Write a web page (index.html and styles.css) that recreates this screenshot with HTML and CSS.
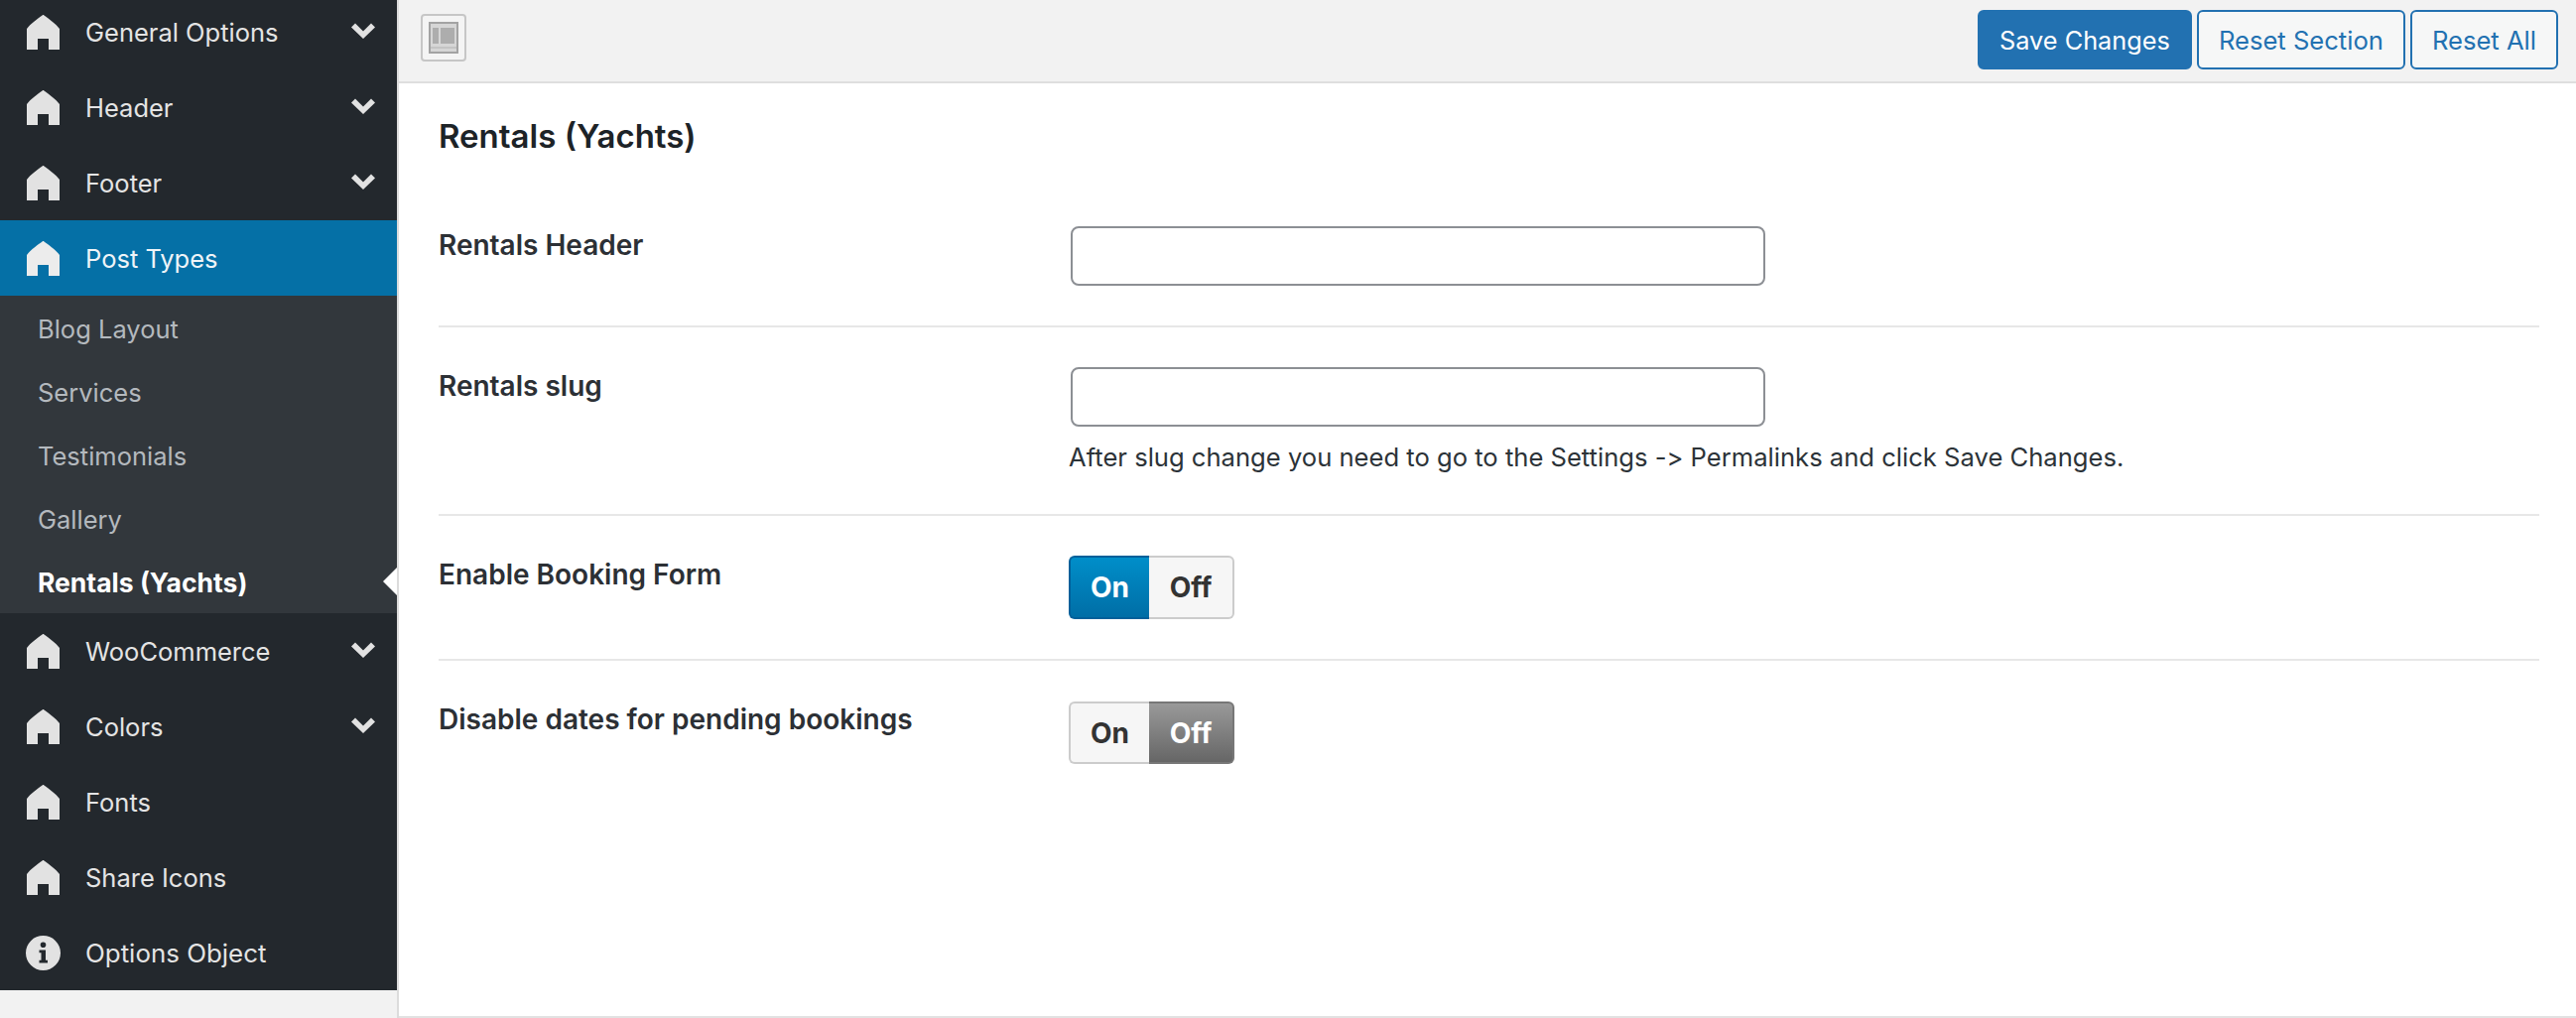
FILE: index.html
```html
<!DOCTYPE html>
<html lang="en">
<head>
<meta charset="utf-8">
<title>Rentals (Yachts)</title>
<link rel="stylesheet" href="styles.css">
</head>
<body>
<svg class="defs" width="0" height="0" aria-hidden="true">
  <symbol id="home" viewBox="0 0 33 35"><path d="M15.6 .4C16.1 0 16.9 0 17.4 .4 22 3.6 29.5 9 33 14V35H22V24H11V35H0V14C3.5 9 11 3.6 15.6 .4Z"/></symbol>
  <symbol id="chev" viewBox="0 0 24 16"><path d="M0 4.5 4 0.5 12 8.5 20 0.5 24 4.5 12 16Z"/></symbol>
</svg>
<div class="app">
  <aside class="sidebar">
    <nav class="menu">
      <a class="item"><svg class="home"><use href="#home"/></svg><span class="lbl">General Options</span><svg class="chev"><use href="#chev"/></svg></a>
      <a class="item"><svg class="home"><use href="#home"/></svg><span class="lbl">Header</span><svg class="chev"><use href="#chev"/></svg></a>
      <a class="item"><svg class="home"><use href="#home"/></svg><span class="lbl">Footer</span><svg class="chev"><use href="#chev"/></svg></a>
      <a class="item current"><svg class="home"><use href="#home"/></svg><span class="lbl">Post Types</span></a>
      <div class="sub">
        <a class="subitem">Blog Layout</a>
        <a class="subitem">Services</a>
        <a class="subitem">Testimonials</a>
        <a class="subitem">Gallery</a>
        <a class="subitem active">Rentals (Yachts)</a>
      </div>
      <a class="item"><svg class="home"><use href="#home"/></svg><span class="lbl">WooCommerce</span><svg class="chev"><use href="#chev"/></svg></a>
      <a class="item"><svg class="home"><use href="#home"/></svg><span class="lbl">Colors</span><svg class="chev"><use href="#chev"/></svg></a>
      <a class="item"><svg class="home"><use href="#home"/></svg><span class="lbl">Fonts</span></a>
      <a class="item"><svg class="home"><use href="#home"/></svg><span class="lbl">Share Icons</span></a>
      <a class="item"><svg class="info" viewBox="0 0 35 35"><path fill-rule="evenodd" d="M17.5 0a17.5 17.5 0 1 0 0 35 17.5 17.5 0 0 0 0-35ZM17.5 6.5a2.8 2.8 0 1 1 0 5.6 2.8 2.8 0 0 1 0-5.6ZM13.5 14.5H20V24.8H22V27.5H13.5V24.8H15.5V17.2H13.5Z"/></svg><span class="lbl lbl-wide">Options Object</span></a>
    </nav>
  </aside>
  <main class="main">
    <header class="topbar">
      <button class="expand" type="button" aria-label="Toggle layout">
        <svg viewBox="0 0 30 32" width="30" height="32"><path fill="#d6d6d6" d="M0 0H30V32H0Z"/><path fill="#a3a3a3" fill-rule="evenodd" d="M0 0H30V32H0ZM2 2V30H28V2Z"/><path fill="#c4c4c4" d="M2 25H28V27H2Z"/><path fill="#adadad" d="M4 6H10V22H4ZM12 6H26V22H12Z"/></svg>
      </button>
      <div class="actions">
        <button class="btn primary" type="button">Save Changes</button>
        <button class="btn" type="button">Reset Section</button>
        <button class="btn" type="button">Reset All</button>
      </div>
    </header>
    <section class="content">
      <h2 class="title">Rentals (Yachts)</h2>
      <div class="row">
        <div class="label">Rentals Header</div>
        <div class="field"><input class="text" type="text" aria-label="Rentals Header"></div>
      </div>
      <div class="row">
        <div class="label">Rentals slug</div>
        <div class="field"><input class="text" type="text" aria-label="Rentals slug">
          <p class="desc">After slug change you need to go to the Settings -&gt; Permalinks and click Save Changes.</p></div>
      </div>
      <div class="row">
        <div class="label">Enable Booking Form</div>
        <div class="field"><div class="switch"><span class="opt on">On</span><span class="opt">Off</span></div></div>
      </div>
      <div class="row last">
        <div class="label">Disable dates for pending bookings</div>
        <div class="field"><div class="switch"><span class="opt">On</span><span class="opt off">Off</span></div></div>
      </div>
    </section>
  </main>
</div>
</body>
</html>
```
FILE: styles.css
```css
* { box-sizing: border-box; }
html, body { margin: 0; height: 100%; }
body { background: #f2f2f2; font-family: Inter, "Liberation Sans", sans-serif; overflow: hidden; }
.defs { display: block; height: 0; }
.app { display: flex; height: 1026px; }

.sidebar { width: 402px; flex: none; border-right: 2px solid #dcdcdc; overflow: hidden; }
.menu { margin-top: -6px; display: flex; flex-direction: column; }
.item { height: 76px; display: flex; align-items: center; padding: 0 22px 0 27px; background: #23282d; color: #e4e4e4; font-size: 25.5px; }
.item.current { background: #0570a6; color: #eef4f8; }
.home { width: 33px; height: 35px; flex: none; fill: #e2e2e2; }
.current .home { fill: #ececec; }
.info { width: 35px; height: 35px; flex: none; margin-left: -1px; margin-right: -1px; fill: #e2e2e2; }
.lbl { margin-left: 26px; padding-top: 1px; flex: 1; }
.lbl-wide { font-size: 25.9px; }
.chev { width: 24px; height: 16px; flex: none; fill: #e2e2e2; margin-top: -2px; }
.sub { background: #32373c; display: flex; flex-direction: column; }
.subitem { height: 64px; display: flex; align-items: center; padding: 2px 0 0 38px; color: #b4b9be; font-size: 25.5px; position: relative; }
.subitem.active { color: #fff; font-weight: 700; font-size: 26.5px; }
.subitem.active::after { content: ""; position: absolute; right: 0; top: 18px; border: 14px solid transparent; border-left-width: 0; border-right-color: #fff; }

.main { flex: 1; min-width: 0; background: #fff; border-bottom: 2px solid #e2e2e2; }
.topbar { height: 84px; background: #f2f2f2; border-bottom: 2px solid #dedede; display: flex; justify-content: space-between; align-items: flex-start; padding: 10px 18px 0 22px; }
.expand { width: 46px; height: 48px; margin-top: 4px; padding: 0; background: #f4f4f4; border: 2px solid #c6c6c6; border-radius: 4px; display: flex; align-items: center; justify-content: center; }
.actions { display: flex; gap: 5px; }
.btn { height: 60px; padding: 0 20px; background: #f6f7f7; border: 2px solid #2271b1; border-radius: 6px; color: #2271b1; font: 400 25.6px Inter, "Liberation Sans", sans-serif; }
.btn.primary { font-size: 25.3px; background: #2271b1; color: #fff; }

.content { padding: 0 37px 0 40px; }
.title { margin: 0; height: 104px; padding-top: 33px; font-size: 33px; line-height: 40px; font-weight: 600; color: #1d2327; }
.row { display: flex; padding: 40px 0; border-bottom: 2px solid #e7e7e7; }
.row.last { border-bottom: 0; }
.label { width: 635px; flex: none; padding-top: 1px; font-size: 28px; line-height: 36px; font-weight: 600; color: #2c3035; }
.field { flex: 1; }
.text { display: block; width: 700px; height: 60px; margin-left: 2px; background: #fff; border: 2px solid #8c8f94; border-radius: 8px; }
.desc { margin: 13px 0 -1px; font-size: 25.6px; line-height: 36px; color: #2c3338; font-variant-ligatures: none; font-feature-settings: "calt" 0; }
.switch { width: 167px; height: 64px; display: flex; border-radius: 6px; }
.last .switch { margin-top: 1px; height: 63px; }
.opt { flex: 1; display: flex; align-items: center; justify-content: center; background: #f6f6f6; border: 2px solid #ccc; font-size: 28px; font-weight: 700; color: #333; }
.opt:first-child { width: 81px; flex: none; border-right: 0; border-radius: 6px 0 0 6px; }
.opt:last-child { border-left: 0; border-radius: 0 6px 6px 0; }
.opt.on { background: linear-gradient(#008ec9, #006ea6); border: 2px solid #00609a; border-right: 0; color: #fff; }
.opt.off { background: linear-gradient(#999, #666); border: 2px solid #777; border-left: 0; color: #fff; }
```
